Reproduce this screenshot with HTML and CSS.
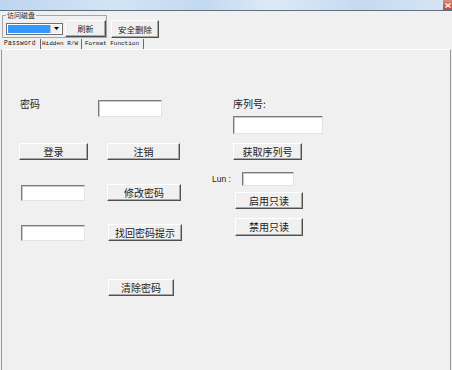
FILE: index.html
```html
<!DOCTYPE html>
<html>
<head>
<meta charset="utf-8">
<link rel="stylesheet" href="styles.css">
</head>
<body>
<div class="window">
  <div class="titlebar"><div class="close"><svg width="6" height="5" viewBox="0 0 6 5"><path d="M0.5 0.5 L5.5 4.5 M5.5 0.5 L0.5 4.5" stroke="#fff" stroke-width="1.2"/></svg></div></div>
  <div class="client">
    <div class="toolbar">
      <fieldset class="group">
        <legend class="group-title">访问磁盘</legend>
        <div class="combo"><div class="combo-value"></div><div class="combo-arrow"><svg width="5" height="3" viewBox="0 0 5 3"><path d="M0 0 H5 L2.5 3 Z" fill="#000"/></svg></div></div>
        <button class="btn btn-refresh">刷新</button>
      </fieldset>
      <button class="btn btn-delete">安全删除</button>
    </div>
    <div class="tabs">
      <div class="tab tab-1 active">Password</div>
      <div class="tab tab-2">Hidden R/W</div>
      <div class="tab tab-3">Format Function</div>
    </div>
    <div class="panel">
      <div class="col col-a">
        <div class="label lbl-pwd">密码</div>
        <button class="btn btn-login">登录</button>
        <div class="input in-a1"></div>
        <div class="input in-a2"></div>
      </div>
      <div class="col col-b">
        <div class="input in-pwd"></div>
        <button class="btn btn-logout">注销</button>
        <button class="btn btn-change">修改密码</button>
        <button class="btn btn-hint">找回密码提示</button>
        <button class="btn btn-clear">清除密码</button>
      </div>
      <div class="col col-c">
        <div class="label lbl-serial">序列号:</div>
        <div class="input in-serial"></div>
        <button class="btn btn-serial">获取序列号</button>
        <div class="lun-row">
          <span class="lun-label">Lun :</span>
          <div class="input in-lun"></div>
        </div>
        <button class="btn btn-ro-on">启用只读</button>
        <button class="btn btn-ro-off">禁用只读</button>
      </div>
    </div>
  </div>
</div>
</body>
</html>
```

FILE: styles.css
```css
html, body {
  margin: 0;
  padding: 0;
}
body {
  width: 452px;
  height: 370px;
  overflow: hidden;
  background: #f0f0f0;
  font-family: "Noto Sans CJK SC", "Liberation Sans", sans-serif;
  color: #1c1c1c;
}
.window {
  display: flex;
  flex-direction: column;
  height: 370px;
}
.titlebar {
  height: 10px;
  flex: none;
  border-bottom: 1px solid #5f6f80;
  background: linear-gradient(90deg, #bdd5ee 0%, #d3e4f5 25%, #c3d9f0 45%, #dde9f6 60%, #c5daf0 80%, #d7e6f5 100%);
  display: flex;
  justify-content: flex-end;
}
.close {
  width: 9px;
  height: 10px;
  background: linear-gradient(180deg, #d98a7c, #c04a3c);
  display: flex;
  align-items: center;
  justify-content: center;
}
.client {
  flex: 1;
  display: flex;
  flex-direction: column;
  min-height: 0;
}
.toolbar {
  display: flex;
  align-items: flex-end;
  height: 27px;
  flex: none;
}
.group {
  margin: 0 0 0 2px;
  padding: 0 0 0 3px;
  border: 1px solid #a6a6a6;
  display: flex;
  align-items: center;
  min-width: 0;
}
.group-title {
  padding: 0 1px;
  font-size: 7px;
  line-height: 9px;
  height: 9px;
}
.combo {
  width: 57px;
  height: 12px;
  box-sizing: border-box;
  border: 1px solid #707070;
  background: #fff;
  display: flex;
  padding: 1px;
}
.combo-value {
  flex: 1;
  background: #3399ff;
}
.combo-arrow {
  width: 10px;
  background: #f0f0f0;
  border-left: 1px solid #c0c0c0;
  display: flex;
  align-items: center;
  justify-content: center;
}
.btn {
  box-sizing: border-box;
  margin: 0;
  padding: 0;
  border: 1px solid;
  border-color: #ffffff #505050 #505050 #ffffff;
  box-shadow: inset -1px -1px 0 #a8a8a8;
  background: #f0f0f0;
  font-family: "Noto Sans CJK SC", "Liberation Sans", sans-serif;
  font-size: 10px;
  line-height: 14px;
  color: #1c1c1c;
  text-align: center;
  height: 17px;
  flex: none;
}
.btn-refresh {
  width: 41px;
  height: 17px;
  margin-left: 2px;
  font-size: 8px;
}
.btn-delete {
  width: 48px;
  height: 18px;
  margin-left: 4px;
  font-size: 8.5px;
}
.tabs {
  display: flex;
  height: 11px;
  flex: none;
  align-items: stretch;
}
.tab {
  box-sizing: border-box;
  font-family: "Liberation Mono", monospace;
  font-size: 6.3px;
  line-height: 10px;
  color: #111;
  border-right: 1px solid #6a6a6a;
  padding-left: 3px;
  margin: 1px 0 0;
  white-space: nowrap;
  overflow: hidden;
}
.tab-1 {
  width: 41px;
  padding-left: 4px;
  letter-spacing: 0.2px;
}
.tab-2 {
  width: 41px;
  padding-left: 1px;
  font-size: 6px;
}
.tab-3 {
  width: 62px;
  padding-left: 3px;
  font-size: 6px;
}
.panel {
  flex: 1;
  margin-left: 1px;
  margin-right: 1px;
  border-left: 1px solid #9a9a9a;
  border-right: 1px solid #9a9a9a;
  border-top: 1px solid #ffffff;
  display: flex;
  align-items: flex-start;
}
.col {
  display: flex;
  flex-direction: column;
  align-items: flex-start;
  flex: none;
}
.col-a {
  margin-left: 17px;
  width: 79px;
}
.col-b {
  width: 114px;
}
.col-c {
  width: 150px;
}
.label {
  font-size: 10px;
  line-height: 10px;
  height: 10px;
  white-space: nowrap;
}
.input {
  box-sizing: border-box;
  background: #fff;
  border: 1px solid;
  border-color: #7a7a7a #e3e3e3 #e3e3e3 #7a7a7a;
  box-shadow: inset 1px 1px 0 #c8c8c8;
  flex: none;
}
.lbl-pwd { margin-top: 49px; margin-left: 1px; }
.btn-login { margin-top: 34px; width: 69px; }
.in-a1 { margin-top: 25px; margin-left: 2px; width: 64px; height: 16px; }
.in-a2 { margin-top: 24px; margin-left: 2px; width: 64px; height: 16px; }

.in-pwd { margin-top: 50px; width: 64px; height: 17px; }
.btn-logout { margin-top: 26px; margin-left: 9px; width: 73px; }
.btn-change { margin-top: 24px; margin-left: 9px; width: 74px; }
.btn-hint { margin-top: 23px; margin-left: 10px; width: 74px; }
.btn-clear { margin-top: 38px; margin-left: 10px; width: 66px; }

.lbl-serial { margin-top: 49px; margin-left: 21px; }
.in-serial { margin-top: 7px; margin-left: 21px; width: 90px; height: 18px; }
.btn-serial { margin-top: 9px; margin-left: 21px; width: 69px; }
.lun-row {
  margin-top: 12px;
  display: flex;
  align-items: center;
  height: 14px;
}
.lun-label {
  font-family: "Liberation Sans", sans-serif;
  font-size: 8.5px;
  width: 30px;
  color: #222;
}
.in-lun { width: 52px; height: 14px; }
.btn-ro-on { margin-top: 6px; margin-left: 23px; width: 68px; }
.btn-ro-off { margin-top: 9px; margin-left: 23px; width: 68px; height: 18px; }
```
